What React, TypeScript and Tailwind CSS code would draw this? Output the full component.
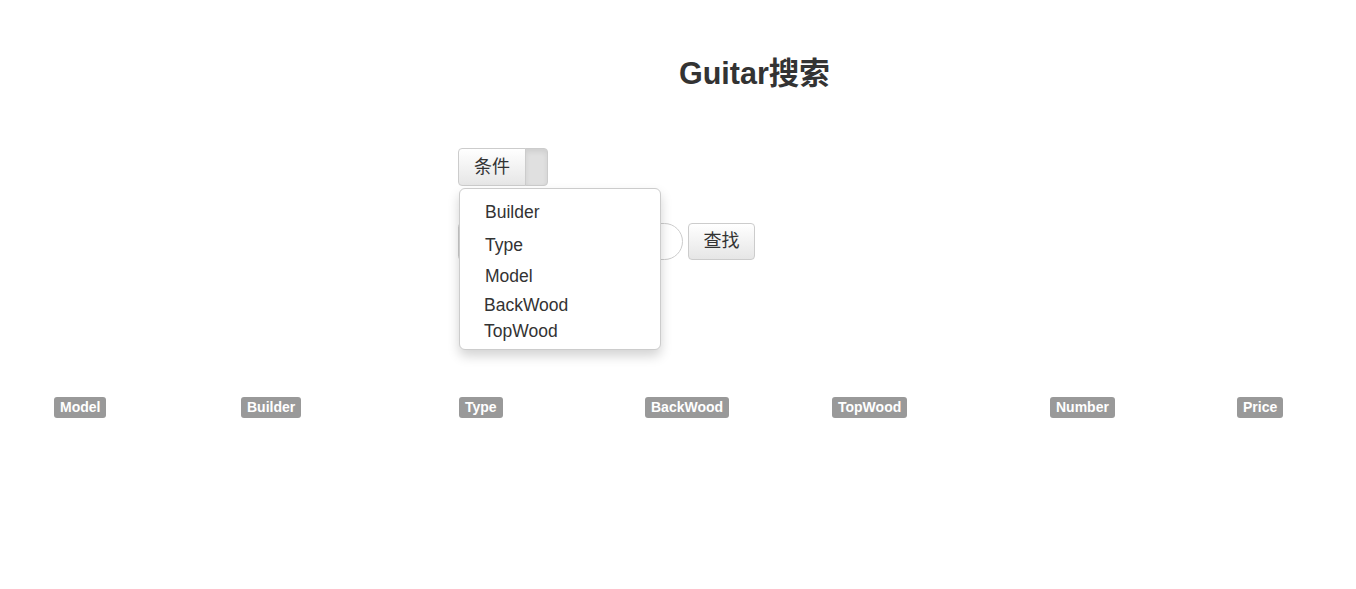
const font = { fontFamily: '"Liberation Sans", "Noto Sans CJK SC", Arial, sans-serif' };

const columns = [
  { name: 'Model', w: 'w-[187px]' },
  { name: 'Builder', w: 'w-[218px]' },
  { name: 'Type', w: 'w-[186px]' },
  { name: 'BackWood', w: 'w-[187px]' },
  { name: 'TopWood', w: 'w-[218px]' },
  { name: 'Number', w: 'w-[187px]' },
  { name: 'Price', w: 'w-[80px]' },
];

const options = [
  { label: 'Builder', h: 'h-[33px]', pl: 'pl-[25px]' },
  { label: 'Type', h: 'h-[32px]', pl: 'pl-[25px]' },
  { label: 'Model', h: 'h-[31px]', pl: 'pl-[25px]' },
  { label: 'BackWood', h: 'h-[27px]', pl: 'pl-[24px]' },
  { label: 'TopWood', h: 'h-[25px]', pl: 'pl-[24px]' },
];

const App = () => {
  return (
    <div className="min-h-screen bg-white text-[#333]" style={font}>
      {/* Title */}
      <div className="pt-[57px] pl-[679px]">
        <h2 className="text-[30.5px] font-bold leading-[33px] text-[#333]">Guitar搜索</h2>
      </div>

      {/* Search form */}
      <div className="pl-[458px] pt-[58px]">
        <div className="relative w-fit">
          <div className="flex h-[38px]">
            <button className="h-full w-[68px] rounded-l-[4px] border border-[#ccc] bg-gradient-to-b from-white to-[#e6e6e6] text-[18px] text-[#333]">
              条件
            </button>
            <button className="h-full w-[23px] -ml-px rounded-r-[4px] border border-[#ccc] bg-[#e0e0e0] shadow-[inset_0_3px_5px_rgba(0,0,0,.08)]"></button>
          </div>

          {/* Dropdown menu */}
          <ul className="absolute left-px top-[40px] z-10 w-[202px] rounded-[6px] border border-[#ccc] bg-white pt-[7px] pb-[5px] text-[17.5px] text-[#333] shadow-[0_6px_12px_rgba(0,0,0,.175)]">
            {options.map((o) => (
              <li key={o.label} className={`${o.h} ${o.pl} flex items-center`}>
                {o.label}
              </li>
            ))}
          </ul>
        </div>

        <div className="mt-[37px] flex items-center gap-[5px]">
          <input
            type="text"
            className="h-[37px] w-[225px] rounded-r-[20px] rounded-l-[4px] border border-[#ccc] bg-white outline-none"
          />
          <button className="h-[37px] w-[67px] rounded-[4px] border border-[#ccc] bg-gradient-to-b from-white to-[#e6e6e6] text-[18px] text-[#333]">
            查找
          </button>
        </div>
      </div>

      {/* Result header */}
      <div className="mt-[135px] flex pl-[54px]">
        {columns.map((c) => (
          <div key={c.name} className={c.w}>
            <span className="inline-block rounded-[3px] bg-[#999] px-[6px] pt-[3px] pb-[4px] text-[14px] font-bold leading-[14px] text-white">
              {c.name}
            </span>
          </div>
        ))}
      </div>
    </div>
  );
};

export default App;
